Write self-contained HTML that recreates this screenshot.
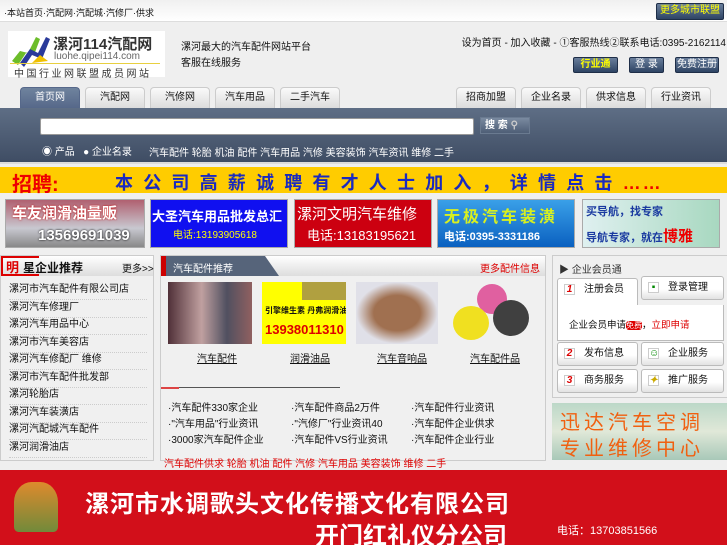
<!DOCTYPE html>
<html><head><meta charset="utf-8"><style>
*{margin:0;padding:0;box-sizing:border-box}
body{width:727px;height:545px;overflow:hidden;position:relative;background:#efefef;font-family:"Liberation Sans","Noto Sans CJK SC",sans-serif;font-size:10px;color:#111}
.a{position:absolute;white-space:nowrap}
.btn{position:absolute;background:linear-gradient(#6a7f9c,#2e4464);border:1px solid #1e2e48;color:#fff;font-size:10px;text-align:center;line-height:14px;border-radius:2px}
.tab{position:absolute;top:87px;height:21px;width:60px;background:linear-gradient(#fafafa,#dcdcdc);border:1px solid #ccc;border-bottom:none;border-radius:4px 4px 0 0;text-align:center;line-height:20px;font-size:10px}
.ad{position:absolute;top:199px;height:49px;border:1px solid #aaa;overflow:hidden;white-space:nowrap}
.box{position:absolute;border:1px solid #ccc;background:#f0f0f0}
.li{position:absolute;left:8px;width:138px;border-bottom:1px dotted #ccc;height:18px;line-height:16px;font-size:10px}
.cell{position:absolute;background:linear-gradient(#fff,#fff 55%,#e2e2e2);border:1px solid #bbb;border-radius:3px;height:24px;line-height:22px;font-size:10px;padding-left:26px}
.num{position:absolute;left:6px;top:5px;width:11px;height:11px;border:1px solid #ccc;background:#fff;color:#d00;font-weight:bold;font-style:italic;font-size:10px;line-height:10px;text-align:center}
</style></head><body>
<div class="a" style="left:0;top:0;width:727px;height:22px;background:linear-gradient(#f0f0f0,#fff);border-bottom:1px solid #ddd"></div>
<div class="a" style="left:4px;top:6px;font-size:9px">·本站首页·汽配网·汽配城·汽修厂·供求</div>
<div class="btn" style="left:656px;top:3px;width:68px;height:17px;color:#ff0">更多城市联盟</div>

<div class="a" style="left:8px;top:31px;width:157px;height:46px;background:#fff">
<svg width="40" height="36" style="position:absolute;left:2px;top:2px"><polygon points="2,28 10,18 18,20 26,4 30,6 24,22 16,20 8,32" fill="#6cbd2a"/><polygon points="10,30 20,16 28,20 36,4 40,6 32,26 22,22 14,34" fill="#2a3a9a"/><polygon points="22,30 30,22 38,28" fill="#f0c000"/></svg>
<div class="a" style="left:45px;top:2px;font-size:15px;font-weight:bold;color:#333">漯河114汽配网</div>
<div class="a" style="left:46px;top:20px;font-size:10px;color:#666">luohe.qipei114.com</div>
<div class="a" style="left:2px;top:32px;width:150px;height:1px;background:#e8d040"></div>
<div class="a" style="left:6px;top:34px;font-size:10px;color:#333;letter-spacing:2.5px">中国行业网联盟成员网站</div>
</div>
<div class="a" style="left:181px;top:38px">漯河最大的汽车配件网站平台</div>
<div class="a" style="left:181px;top:54px">客服在线服务</div>
<div class="a" style="right:1px;top:34px">设为首页 - 加入收藏 - ①客服热线②联系电话:0395-2162114</div>
<div class="btn" style="left:573px;top:57px;width:45px;height:16px;color:#ff0;font-weight:bold">行业通</div>
<div class="btn" style="left:629px;top:57px;width:35px;height:16px">登 录</div>
<div class="btn" style="left:675px;top:57px;width:44px;height:16px">免费注册</div>

<div class="tab" style="left:20px;background:linear-gradient(#6f839e,#56688a);color:#fff;border-color:#56688a">首页网</div>
<div class="tab" style="left:85px">汽配网</div><div class="tab" style="left:150px">汽修网</div><div class="tab" style="left:215px">汽车用品</div><div class="tab" style="left:280px">二手汽车</div>
<div class="tab" style="left:456px">招商加盟</div><div class="tab" style="left:521px">企业名录</div><div class="tab" style="left:586px">供求信息</div><div class="tab" style="left:651px">行业资讯</div>
<div class="a" style="left:0;top:108px;width:727px;height:54px;background:linear-gradient(#5e6e85,#3f4d64)"></div>
<div class="a" style="left:40px;top:118px;width:434px;height:17px;background:#fff;border:1px solid #999;border-radius:2px"></div>
<div class="a" style="left:480px;top:117px;width:50px;height:17px;background:linear-gradient(#7a8aa0,#4e5e76);border:1px solid #6a7a90;color:#fff;font-size:10px;font-weight:bold;line-height:15px;padding-left:4px">搜 索 <span style="color:#ccc">⚲</span></div>
<div class="a" style="left:42px;top:143px;color:#fff">◉ 产品 &nbsp;&nbsp;● 企业名录</div>
<div class="a" style="left:149px;top:144px;color:#fff;font-size:10px">汽车配件 轮胎 机油 配件 汽车用品 汽修 美容装饰 汽车资讯 维修 二手</div>
<div class="a" style="left:0;top:162px;width:727px;height:2px;background:#dcdcdc"></div>

<div class="a" style="left:0;top:167px;width:727px;height:26px;background:#ffcc00"></div>
<div class="a" style="left:12px;top:168px;font-size:20px;font-weight:bold;color:#e00">招聘:</div>
<div class="a" style="left:115px;top:169px;font-size:18px;font-weight:bold;color:#1a2ac0;letter-spacing:10.2px">本公司高薪诚聘有才人士加入，详情点击<span style="color:#e00;letter-spacing:2px">……</span></div>

<div class="ad" style="left:5px;width:140px;background:linear-gradient(#b06070,#c8c8d0 60%,#888)"><div class="a" style="left:6px;top:2px;font-size:15px;font-weight:bold;color:#fff;text-shadow:0 0 2px #c00">车友润滑油量贩</div><div class="a" style="left:32px;top:27px;font-size:15px;font-weight:bold;color:#fff;text-shadow:0 0 2px #000">13569691039</div></div>
<div class="ad" style="left:150px;width:138px;background:#1010f0"><div class="a" style="left:1px;top:6px;font-size:13px;font-weight:bold;color:#fff">大圣汽车用品批发总汇</div><div class="a" style="left:22px;top:26px;font-size:10px;color:#ff0">电话:13193905618</div></div>
<div class="ad" style="left:294px;width:138px;background:#cc0010"><div class="a" style="left:2px;top:3px;font-size:15px;color:#fff">漯河文明汽车维修</div><div class="a" style="left:12px;top:25px;font-size:13px;color:#fff">电话:13183195621</div></div>
<div class="ad" style="left:437px;width:138px;background:linear-gradient(#3aa0e8,#0a60c0)"><div class="a" style="left:6px;top:3px;font-size:16px;font-weight:bold;color:#d8f020;letter-spacing:3px">无极汽车装潢</div><div class="a" style="left:6px;top:28px;font-size:11px;font-weight:bold;color:#fff">电话:0395-3331186</div></div>
<div class="ad" style="left:582px;width:138px;background:linear-gradient(90deg,#dff0f0,#a8d8c0)"><div class="a" style="left:3px;top:3px;font-size:11px;color:#1a3aa0;font-weight:bold">买导航，找专家</div><div class="a" style="left:3px;top:25px;font-size:11px;color:#1a3aa0;font-weight:bold">导航专家，就在<span style="color:#e00;font-size:15px">博雅</span></div></div>

<div class="box" style="left:0;top:255px;width:154px;height:206px">
<div class="a" style="left:0;top:0;width:152px;height:20px;background:linear-gradient(#fff,#ddd)"></div>
<div class="a" style="left:0;top:0;width:38px;height:20px;border-top:2px solid #d00;border-left:2px solid #d00;border-bottom:2px solid #d00"></div>
<div class="a" style="left:5px;top:1px;font-size:13px;color:#d00;font-weight:bold">明</div>
<div class="a" style="left:22px;top:3px;font-size:12px;font-weight:bold">星企业推荐</div>
<div class="a" style="left:121px;top:4px">更多>></div>
<div class="li" style="top:26px">漯河市汽车配件有限公司店</div><div class="li" style="top:44px">漯河汽车修理厂</div><div class="li" style="top:61px">漯河汽车用品中心</div><div class="li" style="top:79px">漯河市汽车美容店</div><div class="li" style="top:96px">漯河汽车修配厂 维修</div><div class="li" style="top:114px">漯河市汽车配件批发部</div><div class="li" style="top:131px">漯河轮胎店</div><div class="li" style="top:149px">漯河汽车装潢店</div><div class="li" style="top:166px">漯河汽配城汽车配件</div><div class="li" style="top:184px">漯河润滑油店</div>
</div>

<div class="box" style="left:160px;top:255px;width:386px;height:206px">
<div class="a" style="left:0;top:0;width:384px;height:20px;background:linear-gradient(#fff,#ddd)"></div>
<svg class="a" style="left:0;top:0" width="120" height="20"><polygon points="0,0 104,0 118,20 0,20" fill="#56647a"/><rect width="5" height="20" fill="#c00"/></svg>
<div class="a" style="left:12px;top:4px;color:#fff">汽车配件推荐</div>
<div class="a" style="right:5px;top:4px;color:#d00">更多配件信息</div>
<div class="a" style="left:7px;top:26px;width:84px;height:62px;background:linear-gradient(90deg,#503038,#c0a0a0 40%,#505060 70%,#906060)"></div>
<div class="a" style="left:101px;top:26px;width:84px;height:62px;background:#ffff00;overflow:hidden"><div class="a" style="left:40px;top:0;width:44px;height:18px;background:#b0a040"></div><div class="a" style="left:3px;top:23px;font-size:8px;font-weight:bold">引擎维生素 丹弗润滑油</div><div class="a" style="left:3px;top:40px;font-size:13px;font-weight:bold;color:#d00">13938011310</div></div>
<div class="a" style="left:195px;top:26px;width:82px;height:62px;background:radial-gradient(#a07050 40%,#e0e0e8 70%)"></div>
<div class="a" style="left:288px;top:26px;width:83px;height:62px;background:#f0f0f0"><div class="a" style="left:28px;top:2px;width:30px;height:30px;border-radius:50%;background:#e060a0"></div><div class="a" style="left:4px;top:24px;width:36px;height:34px;border-radius:50%;background:#f0e020"></div><div class="a" style="left:44px;top:18px;width:36px;height:36px;border-radius:50%;background:#404040"></div></div>
<div class="a" style="left:36px;top:94px;text-decoration:underline">汽车配件</div><div class="a" style="left:129px;top:94px;text-decoration:underline">润滑油品</div><div class="a" style="left:216px;top:94px;text-decoration:underline">汽车音响品</div><div class="a" style="left:309px;top:94px;text-decoration:underline">汽车配件品</div>
<div class="a" style="left:0;top:131px;width:179px;height:1px;background:#555"></div><div class="a" style="left:0;top:131px;width:18px;height:2px;background:#d44"></div>
<div class="a" style="left:7px;top:143px">·汽车配件330家企业</div><div class="a" style="left:130px;top:143px">·汽车配件商品2万件</div><div class="a" style="left:250px;top:143px">·汽车配件行业资讯</div>
<div class="a" style="left:7px;top:159px">·"汽车用品"行业资讯</div><div class="a" style="left:130px;top:159px">·"汽修厂"行业资讯40</div><div class="a" style="left:250px;top:159px">·汽车配件企业供求</div>
<div class="a" style="left:7px;top:175px">·3000家汽车配件企业</div><div class="a" style="left:130px;top:175px">·汽车配件VS行业资讯</div><div class="a" style="left:250px;top:175px">·汽车配件企业行业</div>
<div class="a" style="left:3px;top:199px;color:#d00;font-size:10px">汽车配件供求 轮胎 机油 配件 汽修 汽车用品 美容装饰 维修 二手</div>
</div>

<div class="box" style="left:552px;top:255px;width:176px;height:143px">
<div class="a" style="left:6px;top:5px;color:#333">▶ 企业会员通</div>
<div class="cell" style="left:4px;top:22px;width:81px;height:28px;background:#fff;border-bottom:none;border-radius:3px 3px 0 0"><span class="num">1</span>注册会员</div>
<div class="cell" style="left:88px;top:20px;width:83px"><span class="num" style="color:#080">▪</span>登录管理</div>
<div class="a" style="left:4px;top:49px;width:167px;height:36px;background:#fff;border:1px solid #bbb;border-top:none"></div>
<div class="a" style="left:16px;top:61px;font-size:9.5px">企业会员申请<span style="background:#d00;color:#fff;font-size:8px;border-radius:3px">免费</span>，<span style="color:#d00">立即申请</span></div>
<div class="cell" style="left:4px;top:86px;width:81px"><span class="num">2</span>发布信息</div>
<div class="cell" style="left:88px;top:86px;width:83px"><span class="num" style="color:#080">☺</span>企业服务</div>
<div class="cell" style="left:4px;top:113px;width:81px"><span class="num">3</span>商务服务</div>
<div class="cell" style="left:88px;top:113px;width:83px"><span class="num" style="color:#ca0">✦</span>推广服务</div>
</div>
<div class="a" style="left:552px;top:403px;width:175px;height:57px;background:linear-gradient(#bcd8c8,#e0e8d8 50%,#a8c8b8)"><div class="a" style="left:8px;top:3px;font-size:20px;color:#f06010;letter-spacing:4px">迅达汽车空调</div><div class="a" style="left:8px;top:29px;font-size:20px;color:#f06010;letter-spacing:4px">专业维修中心</div></div>

<div class="a" style="left:0;top:470px;width:727px;height:75px;background:#d20f1a;overflow:hidden">
<div class="a" style="left:14px;top:12px;width:44px;height:50px;background:linear-gradient(#e0a030,#60a040);border-radius:40% 40% 10% 10%;opacity:.85"></div>
<div class="a" style="left:85px;top:14px;font-size:24px;font-weight:bold;color:#fff;letter-spacing:1px">漯河市水调歌头文化传播文化有限公司</div>
<div class="a" style="left:315px;top:46px;font-size:24px;font-weight:bold;color:#fff">开门红礼仪分公司</div>
<div class="a" style="left:557px;top:52px;font-size:11px;color:#fff">电话：13703851566</div>
</div>
</body></html>
